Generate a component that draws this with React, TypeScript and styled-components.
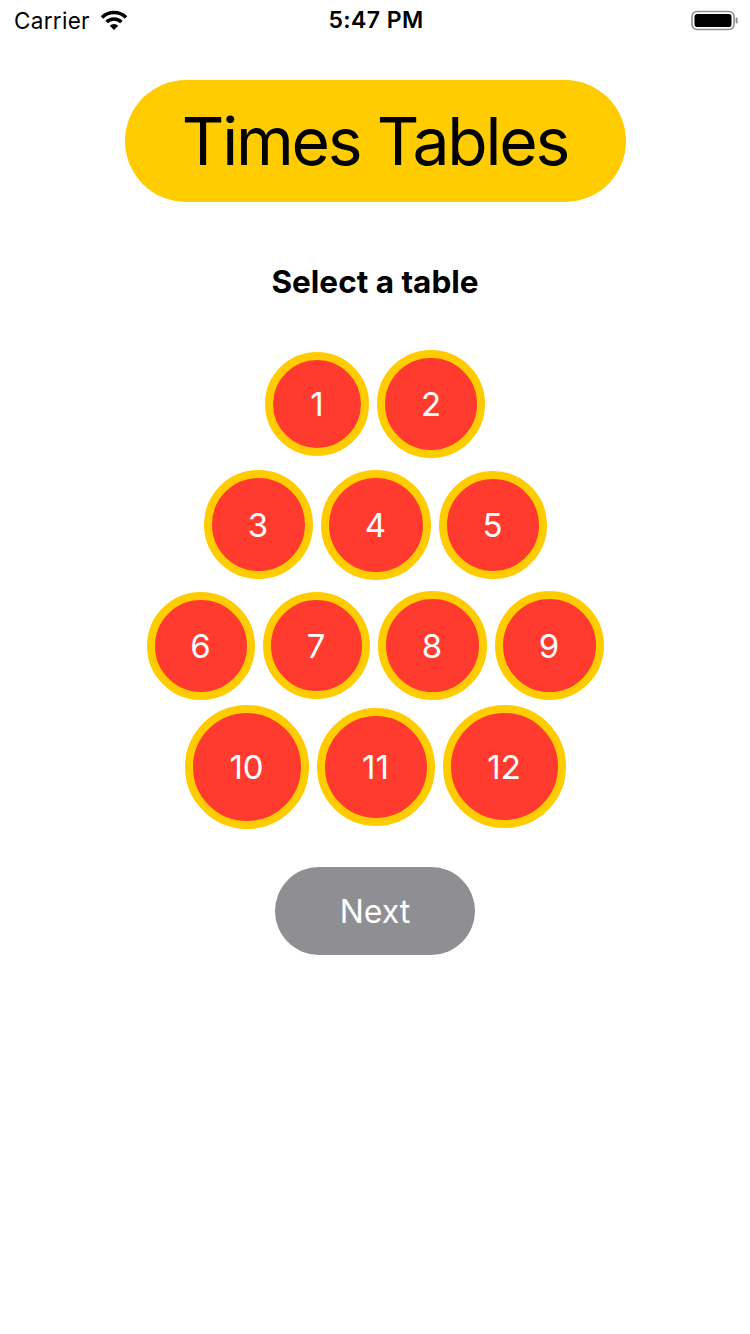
import React from "react";
import styled, { createGlobalStyle } from "styled-components";

const GlobalStyle = createGlobalStyle`
  html, body {
    margin: 0;
    padding: 0;
    background: #ffffff;
  }
  body {
    font-family: Inter, "Noto Sans", "Liberation Sans", sans-serif;
    -webkit-font-smoothing: antialiased;
  }
`;

const Page = styled.div`
  width: 750px;
  min-height: 1334px;
  display: flex;
  flex-direction: column;
  align-items: center;
  background: #ffffff;
`;

const StatusBar = styled.div`
  width: 100%;
  height: 40px;
  box-sizing: border-box;
  padding: 0 12px 0 14px;
  display: grid;
  grid-template-columns: 1fr auto 1fr;
  align-items: center;
  color: #000;
`;

const StatusLeft = styled.div`
  display: flex;
  align-items: center;
  gap: 10px;
  font-size: 22.5px;
  font-weight: 400;
  letter-spacing: 0.3px;
`;

const StatusTime = styled.div`
  font-size: 23px;
  font-weight: 600;
  letter-spacing: 0.4px;
`;

const StatusRight = styled.div`
  display: flex;
  justify-content: flex-end;
  align-items: center;
`;

const TitlePill = styled.div`
  margin-top: 40px;
  width: 501px;
  height: 122px;
  border-radius: 61px;
  background: #ffcc00;
  display: flex;
  align-items: center;
  justify-content: center;
  font-size: 66px;
  font-weight: 400;
  color: #000;
  letter-spacing: -2.2px;
`;

const Subtitle = styled.div`
  margin-top: 60px;
  height: 40px;
  line-height: 40px;
  font-size: 31.5px;
  font-weight: 700;
  color: #000;
`;

const Grid = styled.div`
  margin-top: 41px;
  display: flex;
  flex-direction: column;
`;

const Row = styled.div`
  height: 121px;
  display: flex;
  justify-content: center;
  align-items: center;
  gap: 8px;
`;

const TableButton = styled.div<{ $size: number }>`
  width: ${(p) => p.$size}px;
  height: ${(p) => p.$size}px;
  box-sizing: border-box;
  border-radius: 50%;
  border: 8px solid #ffcc00;
  background: #ff3b30;
  color: #ffffff;
  display: flex;
  align-items: center;
  justify-content: center;
  font-size: 33px;
  font-weight: 400;
`;

const NextButton = styled.div`
  margin-top: 40px;
  width: 200px;
  height: 88px;
  border-radius: 44px;
  background: #8e8e93;
  color: #ffffff;
  display: flex;
  align-items: center;
  justify-content: center;
  font-size: 32px;
  font-weight: 400;
`;

const WifiIcon = () => (
  <svg width="28" height="21" viewBox="0 0 28 21">
    <path
      d="M1.98 7.48 A17 17 0 0 1 26.02 7.48"
      fill="none"
      stroke="#000"
      strokeWidth="3.6"
    />
    <path
      d="M6.58 12.08 A10.5 10.5 0 0 1 21.42 12.08"
      fill="none"
      stroke="#000"
      strokeWidth="3.6"
    />
    <path d="M14 20 L9.76 15.76 A6 6 0 0 1 18.24 15.76 Z" fill="#000" />
  </svg>
);

const BatteryIcon = () => (
  <svg width="47" height="21" viewBox="0 0 47 21">
    <rect
      x="1"
      y="1.5"
      width="42"
      height="18"
      rx="5"
      fill="none"
      stroke="#8e8e8e"
      strokeWidth="1.6"
    />
    <rect x="3.5" y="4" width="37" height="13" rx="2.8" fill="#000" />
    <rect x="44.6" y="7.5" width="2" height="6" rx="1" fill="#8e8e8e" />
  </svg>
);

const rows: { n: number; size: number }[][] = [
  [
    { n: 1, size: 104 },
    { n: 2, size: 108 },
  ],
  [
    { n: 3, size: 109 },
    { n: 4, size: 110 },
    { n: 5, size: 108 },
  ],
  [
    { n: 6, size: 108 },
    { n: 7, size: 107 },
    { n: 8, size: 109 },
    { n: 9, size: 109 },
  ],
  [
    { n: 10, size: 124 },
    { n: 11, size: 118 },
    { n: 12, size: 123 },
  ],
];

export default function App() {
  return (
    <>
      <GlobalStyle />
      <Page>
        <StatusBar>
          <StatusLeft>
            <span>Carrier</span>
            <WifiIcon />
          </StatusLeft>
          <StatusTime>5:47 PM</StatusTime>
          <StatusRight>
            <BatteryIcon />
          </StatusRight>
        </StatusBar>
        <TitlePill>Times Tables</TitlePill>
        <Subtitle>Select a table</Subtitle>
        <Grid>
          {rows.map((row, i) => (
            <Row key={i}>
              {row.map((c) => (
                <TableButton key={c.n} $size={c.size}>
                  {c.n}
                </TableButton>
              ))}
            </Row>
          ))}
        </Grid>
        <NextButton>Next</NextButton>
      </Page>
    </>
  );
}
